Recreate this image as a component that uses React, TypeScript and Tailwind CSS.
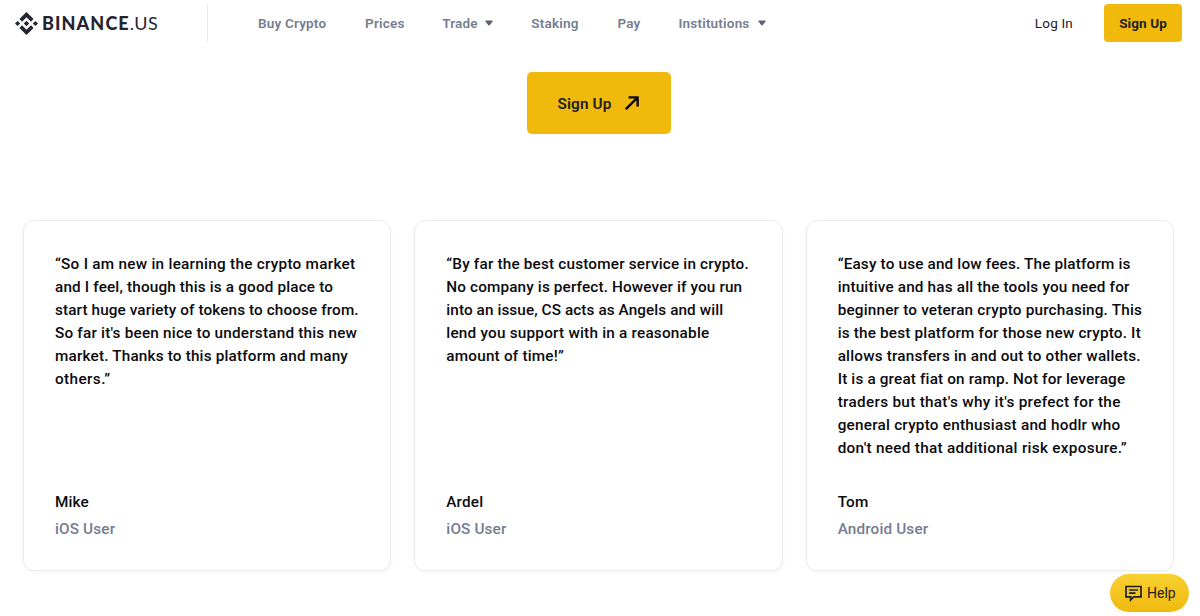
import clsx from 'clsx'

type Line = { text: string; tracking: string }

type Testimonial = {
  name: string
  platform: string
  lines: Line[]
}

const navItems = [
  { label: 'Buy Crypto', width: 'w-[69px]', hasMenu: false },
  { label: 'Prices', width: 'w-[39px]', hasMenu: false },
  { label: 'Trade', width: 'w-[51px]', hasMenu: true },
  { label: 'Staking', width: 'w-[48px]', hasMenu: false },
  { label: 'Pay', width: 'w-[23px]', hasMenu: false },
  { label: 'Institutions', width: 'w-[88px]', hasMenu: true },
]

const testimonials: Testimonial[] = [
  {
    name: 'Mike',
    platform: 'iOS User',
    lines: [
      { text: '“So I am new in learning the crypto market', tracking: 'tracking-[0.27px]' },
      { text: 'and I feel, though this is a good place to', tracking: 'tracking-[0.16px]' },
      { text: 'start huge variety of tokens to choose from.', tracking: 'tracking-[0.11px]' },
      { text: "So far it's been nice to understand this new", tracking: 'tracking-[0.21px]' },
      { text: 'market. Thanks to this platform and many', tracking: 'tracking-[0.18px]' },
      { text: 'others.”', tracking: 'tracking-[0.4px]' },
    ],
  },
  {
    name: 'Ardel',
    platform: 'iOS User',
    lines: [
      { text: '“By far the best customer service in crypto.', tracking: 'tracking-[0.19px]' },
      { text: 'No company is perfect. However if you run', tracking: 'tracking-[0.14px]' },
      { text: 'into an issue, CS acts as Angels and will', tracking: 'tracking-[0.09px]' },
      { text: 'lend you support with in a reasonable', tracking: 'tracking-[0.22px]' },
      { text: 'amount of time!”', tracking: 'tracking-[0.2px]' },
    ],
  },
  {
    name: 'Tom',
    platform: 'Android User',
    lines: [
      { text: '“Easy to use and low fees. The platform is', tracking: 'tracking-[0.17px]' },
      { text: 'intuitive and has all the tools you need for', tracking: 'tracking-[0.17px]' },
      { text: 'beginner to veteran crypto purchasing. This', tracking: 'tracking-[0.19px]' },
      { text: 'is the best platform for those new crypto. It', tracking: 'tracking-[0.18px]' },
      { text: 'allows transfers in and out to other wallets.', tracking: 'tracking-[0.19px]' },
      { text: 'It is a great fiat on ramp. Not for leverage', tracking: 'tracking-[0.16px]' },
      { text: "traders but that's why it's prefect for the", tracking: 'tracking-[0.3px]' },
      { text: 'general crypto enthusiast and hodlr who', tracking: 'tracking-[0.23px]' },
      { text: "don't need that additional risk exposure.”", tracking: 'tracking-[0.3px]' },
    ],
  },
]

function Logo() {
  return (
    <a href="#" className="flex items-center text-[#25252f]">
      <svg className="h-[23px] w-[23px] shrink-0" viewBox="0 0 126.61 126.61" fill="currentColor">
        <path d="M38.73 53.2l24.59-24.58 24.6 24.6 14.3-14.31L63.32 0l-38.9 38.9z" />
        <path d="M0 63.31L14.3 49l14.31 14.31-14.31 14.3z" />
        <path d="M38.73 73.41l24.59 24.59 24.6-24.6 14.31 14.29-38.9 38.91-38.91-38.88z" />
        <path d="M98 63.31l14.3-14.31 14.31 14.3-14.31 14.32z" />
        <path d="M77.83 63.3L63.32 48.78 48.81 63.3l14.51 14.52z" />
      </svg>
      <span className="ml-[4px] font-['Lato',sans-serif] text-[18px] leading-[22px] whitespace-nowrap">
        <span className="font-black tracking-[1.1px]">BINANCE</span>
        <span className="font-normal tracking-[0.5px]">.US</span>
      </span>
    </a>
  )
}

function Caret() {
  return (
    <svg className="h-[6px] w-[8px]" viewBox="0 0 8 6" fill="#58627a">
      <path d="M1 0.5h6q1.2 0 .6 1L4.6 5.2q-.6.7-1.2 0L.4 1.5Q-.2.5 1 .5z" />
    </svg>
  )
}

function Header() {
  return (
    <header className="flex h-[46px] items-center pr-[18px] pl-[15px]">
      <div className="flex h-[38px] w-[193px] items-center border-r border-[#e9ebee]">
        <Logo />
      </div>
      <nav className="ml-[50px] flex gap-[38.1px] text-[13.5px] leading-5 font-semibold tracking-[0.2px] text-[#757d92]">
        {navItems.map((item) => (
          <a key={item.label} href="#" className={clsx('flex items-center justify-between whitespace-nowrap', item.width)}>
            {item.label}
            {item.hasMenu && <Caret />}
          </a>
        ))}
      </nav>
      <div className="ml-auto flex items-center text-[13.5px] whitespace-nowrap text-[#1e2026]">
        <a href="#" className="mr-[31px] tracking-[0.2px]">Log In</a>
        <a href="#" className="flex h-[38px] w-[78px] items-center justify-center rounded-[4px] bg-[#f0b90b] font-bold tracking-[0.1px]">
          Sign Up
        </a>
      </div>
    </header>
  )
}

function TestimonialCard({ name, platform, lines }: Testimonial) {
  return (
    <article className="flex h-[351px] flex-col rounded-[11px] border border-[#eaecef] bg-white px-[31px] pt-[32px] pb-[27px] shadow-[0_2px_4px_rgba(0,0,0,0.04)]">
      <p className="text-[15.3px] leading-[23px] font-medium text-[#0b0b0e]">
        {lines.map((line) => (
          <span key={line.text} className={clsx('block whitespace-nowrap', line.tracking)}>
            {line.text}
          </span>
        ))}
      </p>
      <div className="mt-auto text-[15.3px] leading-[27px] font-medium tracking-[0.15px]">
        <div className="text-[#0b0b0e]">{name}</div>
        <div className="text-[#757d92]">{platform}</div>
      </div>
    </article>
  )
}

function HelpButton() {
  return (
    <button className="fixed right-[11px] bottom-[4px] flex h-[38px] w-[79px] items-center rounded-full bg-linear-to-b from-[#f8d12f] to-[#f0b90b] pl-[15px] text-[14px] text-[#1e2026]">
      <svg className="mr-[5px] h-[17px] w-[17px]" viewBox="0 0 17 17" fill="none" stroke="currentColor" strokeWidth="1.7">
        <path d="M1 1.5h15v10.3H8.6L5.6 15v-3.2H1z" />
        <path d="M4 5h9M4 8.2h6.5" />
      </svg>
      Help
    </button>
  )
}

export default function App() {
  return (
    <div className="h-[616px] overflow-hidden bg-white font-['Roboto','Liberation_Sans',sans-serif]">
      <Header />
      <main>
        <div className="flex justify-center pt-[26px] pr-[3px]">
          <a href="#" className="flex h-[62px] w-[144px] items-center rounded-[5px] bg-[#f0b90b] pl-[31px] text-[15.3px] font-semibold text-[#1e2026]">
            <span className="w-[54px] pt-[2px] tracking-[0.15px] whitespace-nowrap">Sign Up</span>
            <svg className="ml-[13px] h-[14px] w-[14px]" viewBox="0 0 14 14" fill="none" stroke="#0b0b0e" strokeWidth="2.4">
              <path d="M.8 13.2L12.4 1.6M3.6 1.4h9v9" />
            </svg>
          </a>
        </div>
        <section className="grid grid-cols-3 gap-[23px] pt-[86px] pr-[26px] pl-[23px]">
          {testimonials.map((item) => (
            <TestimonialCard key={item.name} {...item} />
          ))}
        </section>
      </main>
      <HelpButton />
    </div>
  )
}
